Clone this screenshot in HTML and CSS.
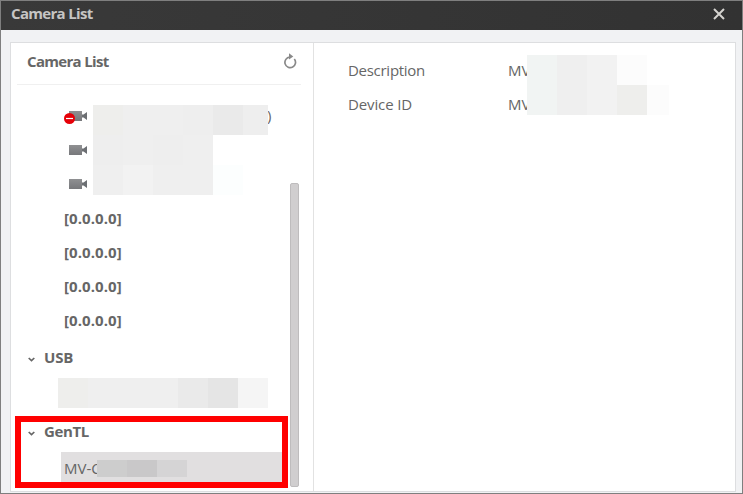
FILE: index.html
```html
<!DOCTYPE html>
<html lang="en">
<head>
<meta charset="utf-8">
<title>Camera List</title>
<link rel="stylesheet" href="styles.css">
</head>
<body>
<svg class="defs" width="0" height="0">
  <defs>
    <linearGradient id="body" x1="0" y1="0" x2="0" y2="1"><stop offset="0" stop-color="#8f9092"/><stop offset="1" stop-color="#77787b"/></linearGradient>
    <symbol id="camera" viewBox="0 0 18 10"><path d="M0 0h13v10H0z" fill="url(#body)"/><path d="M13 3.500h1.500L18 1v8l-3.500-2.500H13z" fill="#6c6f73"/></symbol>
  </defs>
</svg>
<div class="window">
  <header class="titlebar">
    <h1 class="heading">Camera List</h1>
    <svg class="close" viewBox="0 0 12 12"><path d="M1 1l10 10M11 1L1 11"/></svg>
  </header>
  <main class="panel">
    <section class="sidebar">
      <div class="side-head">
        <h2 class="heading">Camera List</h2>
        <svg class="refresh" viewBox="0 0 14 16"><path class="ring" d="M11.300 5.500A5.300 5.300 0 1 1 6.800 3.600"/><path class="tip" d="M6 .3l4.300 3.300L6 6.500z"/></svg>
      </div>
      <div class="list">
        <div class="row cam"><svg class="camera"><use href="#camera"/></svg><svg class="offline" viewBox="0 0 11 11"><circle cx="5.500" cy="5.500" r="5.500" fill="#e60008"/><path d="M2 5.500h7" stroke="#fff" stroke-width="1.200"/></svg><span class="paren">)</span>
          <div class="mask mask-a"><i class="w1"></i><i class="w2"></i><i class="w2"></i><i class="w3"></i><i class="w4"></i><i class="w5"></i></div></div>
        <div class="row cam"><svg class="camera"><use href="#camera"/></svg>
          <div class="mask mask-b"><i class="w3"></i><i class="w2"></i><i class="w3"></i><i class="w2"></i></div></div>
        <div class="row cam"><svg class="camera"><use href="#camera"/></svg>
          <div class="mask mask-c"><i class="w2"></i><i class="w6"></i><i class="w2"></i><i class="w2"></i><i class="w7"></i></div></div>
        <div class="row ip">[0.0.0.0]</div>
        <div class="row ip">[0.0.0.0]</div>
        <div class="row ip">[0.0.0.0]</div>
        <div class="row ip">[0.0.0.0]</div>
        <div class="row group usb"><svg class="chev" viewBox="0 0 7 5"><path d="M.7 1l2.800 2.600L6.300 1"/></svg><span class="usb-name">USB</span></div>
        <div class="usb-item"><i class="w1"></i><i class="w2"></i><i class="w2"></i><i class="w2"></i><i class="w4"></i><i class="w8"></i><i class="w9"></i></div>
        <div class="row group gentl"><svg class="chev" viewBox="0 0 7 5"><path d="M.7 1l2.800 2.600L6.300 1"/></svg><span>GenTL</span></div>
        <div class="selected"><span>MV-C</span><div class="mask mask-d"><i></i><i></i><i></i></div></div>
        <div class="scroll"></div>
        <div class="highlight"></div>
      </div>
    </section>
    <section class="details">
      <div class="field"><span class="label desc">Description</span><span class="value">MV</span></div>
      <div class="field"><span class="label dev">Device ID</span><span class="value">MV</span></div>
      <div class="mask mask-e"><i class="w10"></i><i class="w2"></i><i class="w6"></i><i class="w11"></i></div>
      <div class="mask mask-f"><i class="w10"></i><i class="w2"></i><i class="w6"></i><i class="w1"></i><i class="w11"></i></div>
    </section>
  </main>
</div>
</body>
</html>
```
FILE: styles.css
```css
* { box-sizing: border-box; }
body { margin: 0; font: 15px/20px "Open Sans", "Noto Sans", sans-serif; color: #666; }
.defs { position: absolute; }
.window { width: 743px; height: 494px; border: 1px solid #7f7f7f; background: #f1f2f4; }
.titlebar { height: 29px; padding: 0 17px 0 10px; display: flex; align-items: center; justify-content: space-between; background: linear-gradient(90deg, #393939, #323232); }
.heading { margin: 0; font-size: 15px; line-height: 20px; font-weight: 700; letter-spacing: -.68px; white-space: nowrap; }
.titlebar .heading { color: #c6c5c3; margin-top: -5px; }
.close { width: 12px; height: 12px; margin-top: -3px; fill: none; stroke: #d5d3cf; stroke-width: 2; }
.panel { display: flex; width: 726px; height: 450px; margin: 12px 0 0 9px; background: #fff; border: 1px solid #dddee0; }
.sidebar { width: 303px; border-right: 1px solid #e2e2e2; }
.side-head { height: 42px; width: 284px; margin-left: 6px; padding: 0 4px 6px 10px; border-bottom: 1px solid #f0f0f0; display: flex; align-items: center; justify-content: space-between; }
.refresh { width: 14px; height: 16px; }
.ring { fill: none; stroke: #898989; stroke-width: 1.700; transform: translateY(.5px); }
.tip { fill: #898989; }
.list { position: relative; height: 406px; padding-top: 14px; }
.row { position: relative; height: 34px; display: flex; align-items: center; }
.cam { padding-left: 58px; }
.camera { width: 18px; height: 10px; }
.offline { position: absolute; left: 53px; top: 14px; width: 11px; height: 11px; }
.paren { position: absolute; left: 256px; top: 6px; }
.mask { position: absolute; display: flex; left: 82px; height: 30px; }
.mask i { width: 30px; height: 100%; }
.mask-a { top: 6px; width: 175px; overflow: hidden; }
.mask-a i { flex-shrink: 0; }
.mask-a i:last-child { width: 25px; }
.mask-b { top: 2px; }
.mask-c { top: -2px; }
.w1 { background: #eeeeec; } .w2 { background: #efefef; } .w3 { background: #eee; }
.w4 { background: #eaeaea; } .w5 { background: #eee; } .w6 { background: #f2f2f2; }
.w7 { background: #fcfefe; } .w8 { background: #e5e5e5; } .w9 { background: #f5f5f5; }
.w10 { background: #f1f4f3; } .w11 { background: #fcfcfc; }
.ip { padding-left: 53px; font-size: 15px; font-weight: 700; letter-spacing: .08px; }
.group { padding: 0 0 2px 17px; font-weight: 700; font-size: 15px; letter-spacing: -.4px; }
.usb { margin-top: 4px; }
.chev { width: 7px; height: 5px; margin: 4px 9px 0 0; fill: none; stroke: #666; stroke-width: 1.700; }
.usb-name { letter-spacing: -.2px; }
.usb-item { height: 30px; margin: 3px 0 0 47px; display: flex; }
.usb-item i { width: 30px; }
.gentl { margin-top: 7px; }
.selected { position: relative; height: 30px; width: 221px; margin: 3px 0 0 50px; padding: 6px 0 0 3px; background: #e1dfe0; }
.mask-d { left: 36px; top: 8px; height: 17px; }
.mask-d i { background: #cdcdcd; }
.mask-d i:nth-child(2) { background: #c9c8c9; }
.mask-d i:nth-child(3) { background: #d5d4d5; }
.scroll { position: absolute; left: 279px; top: 98px; width: 9px; height: 304px; border: 1px solid #bebcbd; border-radius: 2px; background: #d0cecf; }
.highlight { position: absolute; left: 4px; top: 331px; width: 273px; height: 72px; border: 6px solid #f00; }
.details { position: relative; flex: 1; padding: 10px 0 0 34px; }
.field { height: 34px; display: flex; align-items: center; }
.label { width: 160px; }
.desc { letter-spacing: -.28px; }
.dev { letter-spacing: -.12px; }
.mask-e { left: 213px; top: 12px; }
.mask-f { left: 213px; top: 42px; }
.mask-f i:last-child { width: 22px; }
```
